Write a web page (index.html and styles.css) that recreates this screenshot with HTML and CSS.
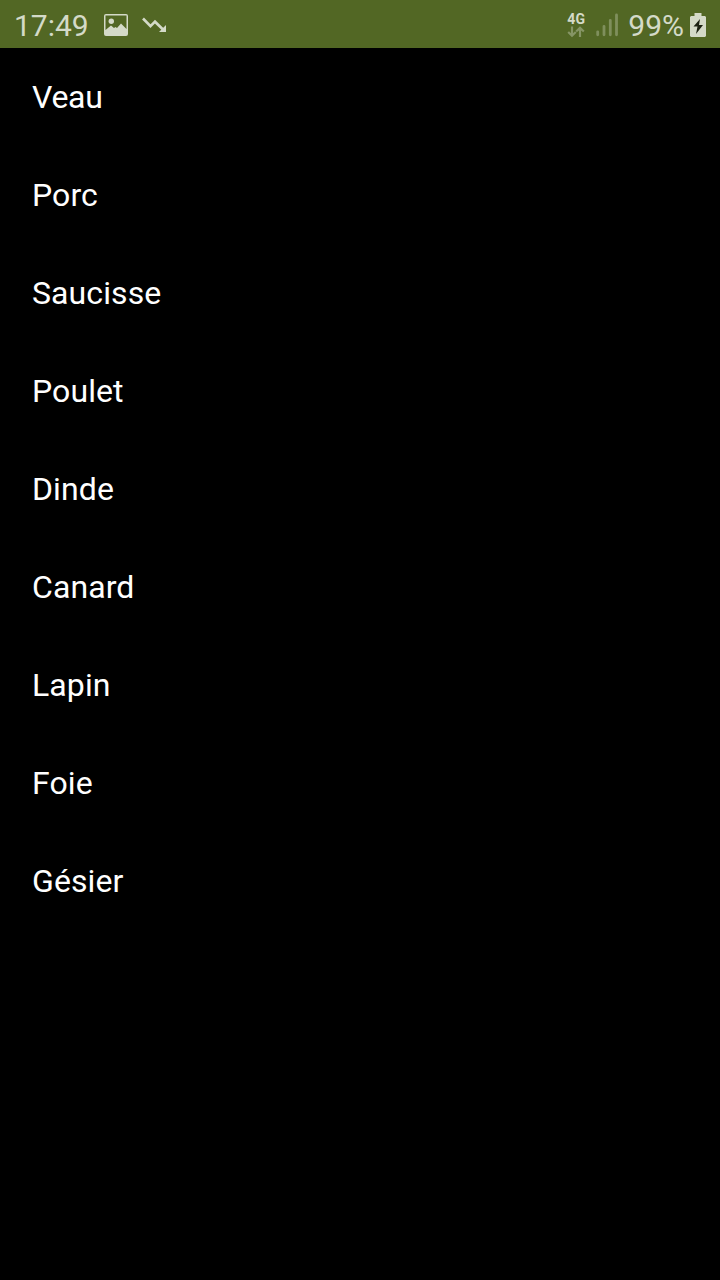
FILE: index.html
```html
<!DOCTYPE html>
<html lang="fr">
<head>
    <meta charset="UTF-8">
    <meta name="viewport" content="width=device-width, initial-scale=1.0">
    <title>Viandes</title>
    <link rel="stylesheet" href="styles.css">
</head>
<body>
<div class="status-bar">
    <span class="time">17:49</span>
    <svg class="picture" viewBox="0 0 24 22"><path fill-rule="evenodd" d="M2 0h20a2 2 0 0 1 2 2v18a2 2 0 0 1-2 2H2a2 2 0 0 1-2-2V2a2 2 0 0 1 2-2zM1.500 1.500V16L7 11.500l3 2.500 1.500-1L13 14l4-4.500 5.500 5.500V1.500z"/><circle cx="7.300" cy="7.300" r="2.700"/></svg>
    <svg class="trend" viewBox="0 0 24 16"><path class="line" d="M1 1.500l7.500 7.700L13 4.700l8 7.800"/><path d="M24 8v7h-7z"/></svg>
    <div class="right">
        <div class="network">
            <span>4G</span>
            <svg class="arrows" viewBox="0 0 18 12"><path d="M5 .5v9M1.200 6L5 9.700 8.800 6M13 11V2M9.200 5.500L13 1.800l3.800 3.700"/></svg>
        </div>
        <svg class="signal" viewBox="0 0 22 24"><path d="M1.700 18.800v3M8 13.300v8.500M14.300 7.300v14.500M20.500 2v19.800"/></svg>
        <span class="percent">99%</span>
        <svg class="battery" viewBox="0 0 16 24"><path d="M4.500 0h7v3H15l1 1v19l-1 1H1l-1-1V4l1-1h3.500z"/><path class="bolt" d="M10 6l-6.500 7.500h4L6 21l7-9H9z"/></svg>
    </div>
</div>

<ul class="list">
    <li class="first">Veau</li>
    <li>Porc</li>
    <li>Saucisse</li>
    <li>Poulet</li>
    <li>Dinde</li>
    <li>Canard</li>
    <li>Lapin</li>
    <li>Foie</li>
    <li>Gésier</li>
</ul>
</body>
</html>
```
FILE: styles.css
```css
body {
    margin: 0;
    background-color: #000;
    color: #fff;
    font-family: Roboto, sans-serif;
}

.status-bar {
    display: flex;
    align-items: center;
    box-sizing: border-box;
    height: 48px;
    padding: 2px 14px 0 14px;
    background-color: #526724;
    color: #d4dac8;
    font-size: 30px;
}

.status-bar svg {
    display: block;
    fill: #d4dac8;
}

.picture {
    width: 24px;
    height: 22px;
    margin-left: 15px;
}

.trend {
    width: 24px;
    height: 16px;
    margin-left: 14px;
}

.trend .line {
    fill: none;
    stroke: #d4dac8;
    stroke-width: 2.6;
}

.right {
    display: flex;
    align-items: center;
    margin-left: auto;
}

.network {
    margin-right: 1px;
    font-size: 14px;
    font-weight: bold;
    line-height: 14px;
    letter-spacing: 0.2px;
}

.status-bar .arrows {
    width: 18px;
    height: 12px;
    fill: none;
    stroke: #869565;
    stroke-width: 2.2;
}

.status-bar .signal {
    width: 22px;
    height: 24px;
    margin: 0 10px;
    fill: none;
    stroke: #7f8f5c;
    stroke-width: 2.8;
    stroke-linecap: round;
}

.battery {
    width: 16px;
    height: 24px;
    margin-left: 6px;
}

.status-bar .bolt {
    fill: #1c2212;
}

.list {
    margin: 0;
    padding: 0;
    list-style: none;
}

.list li {
    height: 98px;
    padding-left: 32px;
    font-size: 32px;
    line-height: 98px;
    letter-spacing: 0.1px;
}

.list .first {
    letter-spacing: -0.3px;
}
```
